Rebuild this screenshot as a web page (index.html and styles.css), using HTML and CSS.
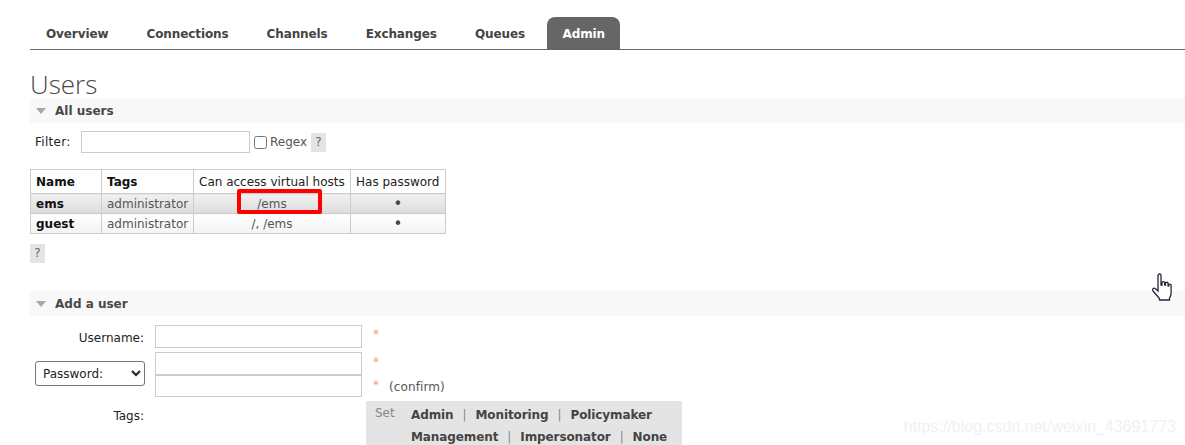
FILE: index.html
```html
<!DOCTYPE html>
<html lang="en">
<head>
<meta charset="utf-8">
<title>Users</title>
<link rel="stylesheet" href="styles.css">
</head>
<body>
<nav class="tabs">
  <a class="tab">Overview</a>
  <a class="tab">Connections</a>
  <a class="tab">Channels</a>
  <a class="tab">Exchanges</a>
  <a class="tab">Queues</a>
  <a class="tab active">Admin</a>
</nav>
<main class="main">
  <h1 class="title">Users</h1>
  <section class="section">
    <h2 class="bar"><span class="tri"></span>All users</h2>
    <div class="filter">
      <label class="filter-label">Filter:</label>
      <input class="input filter-input" type="text">
      <input class="check" type="checkbox">
      <span class="regex">Regex</span>
      <span class="help">?</span>
    </div>
    <div class="table-wrap">
      <table class="users">
        <thead>
          <tr><th class="c-name b">Name</th><th class="c-tags b">Tags</th><th class="c-vh">Can access virtual hosts</th><th class="c-pw">Has password</th></tr>
        </thead>
        <tbody>
          <tr class="odd"><td class="b">ems</td><td>administrator</td><td class="ctr">/ems</td><td class="ctr dot">•</td></tr>
          <tr class="even"><td class="b">guest</td><td>administrator</td><td class="ctr">/, /ems</td><td class="ctr dot">•</td></tr>
        </tbody>
      </table>
      <div class="mark"></div>
    </div>
    <span class="help help-block">?</span>
  </section>
  <section class="section add">
    <h2 class="bar"><span class="tri"></span>Add a user</h2>
    <div class="form">
      <div class="lbl l-user">Username:</div>
      <div class="fld"><input class="input wide" type="text"></div>
      <div class="req r-user">*</div>

      <div class="lbl l-pass"><select class="sel"><option>Password:</option></select></div>
      <div class="fld pass"><input class="input wide" type="password"><input class="input wide second" type="password"></div>
      <div class="req r-pass"><span>*</span><span class="confirm-line">*<span class="confirm">(confirm)</span></span></div>

      <div class="lbl l-tags">Tags:</div>
      <div class="tagset">
        <span class="set">Set</span>
        <div class="taglist">
          <div><b>Admin</b><i>|</i><b>Monitoring</b><i>|</i><b>Policymaker</b></div>
          <div><b>Management</b><i>|</i><b>Impersonator</b><i>|</i><b>None</b></div>
        </div>
      </div>
    </div>
  </section>
</main>
<svg class="cursor" width="24" height="32" viewBox="0 0 24 32">
  <path d="M7 3.500c0-2 3-2 3 0V13h1v-2.500c0-1.300 2.700-1.300 2.700 0V13h.8v-1.800c0-1.300 2.600-1.300 2.600 0V14h.6v-1c0-1.300 2.400-1.300 2.400 0v8c0 2-.6 3.500-1.600 5v2H8.500v-1.500L2 19c-1.300-2 .9-3.700 2.500-2.300L7 19z" fill="#fff" stroke="#26263a" stroke-width="1.300"/>
</svg>
<div class="watermark">https://blog.csdn.net/weixin_43691773</div>
</body>
</html>
```
FILE: styles.css
```css
* { box-sizing: border-box; }
html, body { margin: 0; height: 445px; overflow: hidden; background: #fff; }
body { position: relative; font: 12px/1.2 "DejaVu Sans", Verdana, sans-serif; color: #444; }

.tabs { display: flex; gap: 8px; height: 50px; margin-left: 30px; padding: 17px 0 0 1px; border-bottom: 1px solid #666; }
.tab { height: 32px; padding: 1px 15px 0; line-height: 32px; font-weight: bold; font-size: 12px; letter-spacing: -0.1px; color: #444; border-radius: 8px 8px 0 0; }
.tab.active { margin-left: -1px; padding-left: 15.500px; background: #666; color: #fff; }

.main { padding-left: 30px; }
.title { margin: 0; height: 48px; padding-top: 19px; font: 300 26px/30px "Open Sans", "DejaVu Sans", sans-serif; color: #484848; }
.bar { display: flex; align-items: center; height: 25px; margin: 0; padding: 1px 0 0 6px; background: #f8f8f8; font-size: 12px; font-weight: bold; color: #484848; }
.tri { width: 0; height: 0; margin-right: 9px; border: 5.500px solid transparent; border-top: 6px solid #a8a8a8; border-bottom: 0; }

.filter { display: flex; align-items: center; height: 22px; margin-top: 8px; padding-left: 5px; color: #222; }
.filter-label { width: 46px; letter-spacing: 0.3px; }
.input { display: block; height: 23px; margin: 0; padding: 0; border: 1px solid #ccc; background: #fff; outline: 0; }
.filter-input { width: 169px; height: 22px; }
.check { width: 13px; height: 13px; margin: 0 3px 0 4px; }
.regex { width: 41px; color: #555; }
.help { display: block; width: 15px; height: 19px; background: #e4e4e4; color: #666; text-align: center; line-height: 19px; }
.help-block { margin-top: 10px; }

.table-wrap { position: relative; width: 416px; margin-top: 16px; }
.users { border-collapse: collapse; table-layout: fixed; width: 415px; font-size: 12px; }
.users th, .users td { border: 1px solid #ccc; padding: 1px 5px 0; white-space: nowrap; overflow: hidden; text-align: left; }
.users th { height: 24px; font-weight: normal; color: #222; background: #fff; }
.users td { height: 20px; color: #555; }
.users .b { font-weight: bold; color: #111; }
.users .ctr { text-align: center; }
.users .dot { padding-top: 2px; font-size: 15px; line-height: 15px; color: #444; }
.c-name { width: 71px; }
.c-tags { width: 92px; }
.c-vh { width: 157px; }
.c-pw { width: 95px; }
.odd td { background: linear-gradient(#f0f0f0, #dcdcdc); }
.even td { background: linear-gradient(#fff, #f3f3f3); }
.mark { position: absolute; left: 207px; top: 20px; width: 85px; height: 25px; border: 4px solid #f00; border-radius: 2px; }

.add { margin-top: 28px; }
.form { display: grid; grid-template-columns: 114px 207px auto; column-gap: 11px; justify-content: start; margin-top: 9px; }
.lbl { text-align: right; color: #222; }
.l-user { height: 27px; padding-top: 6px; }
.l-pass { padding: 9px 0 0 5px; text-align: left; }
.l-tags { padding-top: 8px; }
.fld { height: 27px; }
.fld.pass { height: 49px; }
.wide { width: 207px; }
.second { height: 22px; }
.sel { display: block; width: 110px; height: 25px; padding-left: 3px; border: 1px solid #767676; border-radius: 3px; background: #fff; font: 12px "DejaVu Sans", sans-serif; color: #222; }
.req { color: #f79a86; }
.r-user { padding-top: 2px; }
.r-pass { display: flex; flex-direction: column; gap: 9px; padding-top: 3px; }
.confirm-line { display: flex; }
.confirm { margin: 2px 0 0 10px; color: #555; letter-spacing: 0.1px; }
.tagset { grid-column: 2 / span 2; display: flex; width: 316px; height: 44px; margin-left: 211px; padding: 5px 0 0 9px; background: #e4e4e4; overflow: hidden; }
.set { width: 36px; color: #888; }
.taglist { margin-top: -2px; font-weight: bold; color: #444; line-height: 22px; letter-spacing: -0.1px; }
.taglist b { font-weight: bold; }
.taglist i { margin: 0 9px; font-style: normal; font-weight: normal; color: #888; }

.cursor { position: absolute; left: 1151px; top: 272px; }
.watermark { position: absolute; right: 9px; top: 418px; font: 16px "Liberation Sans", sans-serif; color: #f1f1f1; }
```
